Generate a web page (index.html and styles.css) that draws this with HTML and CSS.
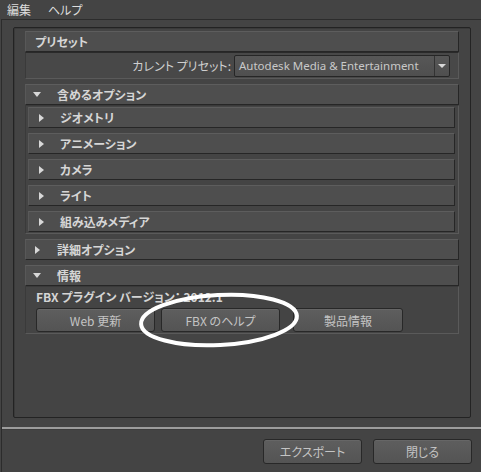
FILE: index.html
```html
<!DOCTYPE html>
<html lang="ja">
<head>
<meta charset="utf-8">
<link rel="stylesheet" href="styles.css">
</head>
<body>
<div class="menubar">
  <span class="menu-item">編集</span>
  <span class="menu-item">ヘルプ</span>
</div>
<div class="window">
  <div class="frame">
    <div class="section">
      <div class="header plain"><span class="label">プリセット</span></div>
      <div class="preset-body">
        <span class="preset-label">カレント プリセット:</span>
        <div class="dropdown">
          <span class="dropdown-text">Autodesk Media &amp; Entertainment</span>
          <span class="dropdown-arrow"><span class="tri-down small"></span></span>
        </div>
      </div>
    </div>

    <div class="section">
      <div class="header"><span class="tri-down"></span><span class="label">含めるオプション</span></div>
      <div class="children">
        <div class="child"><span class="tri-right"></span><span class="label">ジオメトリ</span></div>
        <div class="child"><span class="tri-right"></span><span class="label">アニメーション</span></div>
        <div class="child"><span class="tri-right"></span><span class="label">カメラ</span></div>
        <div class="child"><span class="tri-right"></span><span class="label">ライト</span></div>
        <div class="child"><span class="tri-right"></span><span class="label">組み込みメディア</span></div>
      </div>
    </div>

    <div class="section">
      <div class="header"><span class="tri-right"></span><span class="label">詳細オプション</span></div>
    </div>

    <div class="section">
      <div class="header"><span class="tri-down"></span><span class="label">情報</span></div>
      <div class="info-body">
        <div class="version">FBX プラグイン バージョン： 2012.1</div>
        <div class="info-buttons">
          <button class="btn btn-web">Web 更新</button>
          <button class="btn btn-help">FBX のヘルプ</button>
          <button class="btn btn-product">製品情報</button>
        </div>
        <svg class="circle-mark" width="170" height="64" viewBox="0 0 170 64">
          <ellipse cx="85" cy="32" rx="78" ry="25" fill="none" stroke="#ffffff" stroke-width="4" transform="rotate(-3 85 32)"/>
        </svg>
      </div>
    </div>
  </div>
  <div class="separator"></div>
  <div class="footer">
    <button class="btn btn-foot">エクスポート</button>
    <button class="btn btn-foot">閉じる</button>
  </div>
</div>
</body>
</html>
```

FILE: styles.css
```css
html, body {
  margin: 0;
  padding: 0;
}
body {
  width: 481px;
  height: 472px;
  overflow: hidden;
  background: #444444;
  color: #d2d2d2;
  font-family: "Noto Sans CJK JP", "Noto Sans", sans-serif;
  font-size: 12px;
  font-feature-settings: "palt";
}
.menubar {
  height: 19px;
  display: flex;
  align-items: center;
  padding-left: 7px;
  gap: 17px;
  color: #dcdcdc;
  font-size: 12px;
}
.window {
  margin-left: 1px;
  border-top: 1px solid #2c2c2c;
  border-left: 1px solid #2c2c2c;
  height: 452px;
  display: flex;
  flex-direction: column;
}
.frame {
  margin: 7px 10px 0 11px;
  height: 386px;
  border: 1px solid #232323;
  border-radius: 2px;
  box-shadow: inset 1px 1px 0 #3a3a3a;
  padding: 3px 11px 0 11px;
  display: flex;
  flex-direction: column;
  gap: 5px;
  position: relative;
}
.section {
  display: flex;
  flex-direction: column;
}
.header {
  height: 19px;
  background: #4e4e4e;
  border-top: 1px solid #5d5d5d;
  border-left: 1px solid #585858;
  border-right: 1px solid #262626;
  border-bottom: 1px solid #262626;
  display: flex;
  align-items: center;
  font-weight: bold;
  color: #d6d6d6;
}
.header.plain .label {
  padding-left: 9px;
}
.header .tri-down {
  margin-left: 7px;
}
.header .tri-right {
  margin-left: 9px;
}
.header .tri-down + .label {
  margin-left: 16px;
}
.header .tri-right + .label {
  margin-left: 17px;
}
.tri-down {
  width: 0;
  height: 0;
  border-left: 4px solid transparent;
  border-right: 4px solid transparent;
  border-top: 5px solid #d8d8d8;
}
.tri-down.small {
  border-top-width: 4px;
}
.tri-right {
  width: 0;
  height: 0;
  border-top: 4px solid transparent;
  border-bottom: 4px solid transparent;
  border-left: 5px solid #d8d8d8;
}
.preset-body {
  height: 25px;
  background: #484848;
  border-top: 1px solid #2a2a2a;
  border-left: 1px solid #3a3a3a;
  border-right: 1px solid #5a5a5a;
  border-bottom: 1px solid #5a5a5a;
  display: flex;
  align-items: center;
  justify-content: flex-end;
  padding-right: 8px;
}
.preset-label {
  color: #cfcfcf;
  margin-right: 3px;
}
.dropdown {
  width: 214px;
  height: 20px;
  background: linear-gradient(#575757, #4f4f4f);
  border: 1px solid #262626;
  border-radius: 2px;
  display: flex;
  align-items: center;
}
.dropdown-text {
  flex: 1;
  padding-left: 4px;
  font-family: "Noto Sans", "Liberation Sans", sans-serif;
  font-size: 11.5px;
  color: #c9c9c9;
  white-space: nowrap;
}
.dropdown-arrow {
  width: 14px;
  height: 20px;
  border-left: 1px solid #333333;
  display: flex;
  align-items: center;
  justify-content: center;
}
.children {
  border-top: 1px solid #3a3a3a;
  border-left: 1px solid #3a3a3a;
  border-right: 1px solid #5a5a5a;
  border-bottom: 1px solid #5a5a5a;
  padding: 1px 3px 1px 2px;
  display: flex;
  flex-direction: column;
  gap: 5px;
}
.child {
  height: 19px;
  background: #4e4e4e;
  border-top: 1px solid #5d5d5d;
  border-left: 1px solid #585858;
  border-right: 1px solid #262626;
  border-bottom: 1px solid #262626;
  display: flex;
  align-items: center;
  font-weight: bold;
  color: #d6d6d6;
}
.child .tri-right {
  margin-left: 10px;
}
.child .label {
  margin-left: 16px;
}
.info-body {
  position: relative;
  height: 46px;
  border-top: 1px solid #3a3a3a;
  border-left: 1px solid #3a3a3a;
  border-right: 1px solid #5a5a5a;
  border-bottom: 1px solid #5a5a5a;
  padding: 0 0 0 10px;
  display: flex;
  flex-direction: column;
}
.version {
  font-weight: bold;
  color: #d4d4d4;
  height: 21px;
  line-height: 19px;
}
.info-buttons {
  display: flex;
  gap: 6px;
}
.btn {
  height: 24px;
  background: linear-gradient(#5e5e5e, #545454);
  border: 1px solid #282828;
  border-radius: 3px;
  color: #c4c4c4;
  font-family: "Noto Sans CJK JP", "Noto Sans", sans-serif;
  font-feature-settings: "palt";
  font-size: 12px;
  padding: 0;
  box-shadow: inset 0 1px 0 #666666;
}
.btn-web { width: 119px; }
.btn-help { width: 119px; }
.btn-product { width: 110px; margin-left: 7px; }
.circle-mark {
  position: absolute;
  left: 108px;
  top: 1px;
  pointer-events: none;
}
.separator {
  margin-top: 9px;
  height: 2px;
  background: #9c9c9c;
  border-bottom: 1px solid #3c3c3c;
}
.footer {
  display: flex;
  justify-content: flex-end;
  gap: 11px;
  padding-right: 9px;
  margin-top: 9px;
}
.btn-foot {
  width: 99px;
  height: 25px;
}
```
